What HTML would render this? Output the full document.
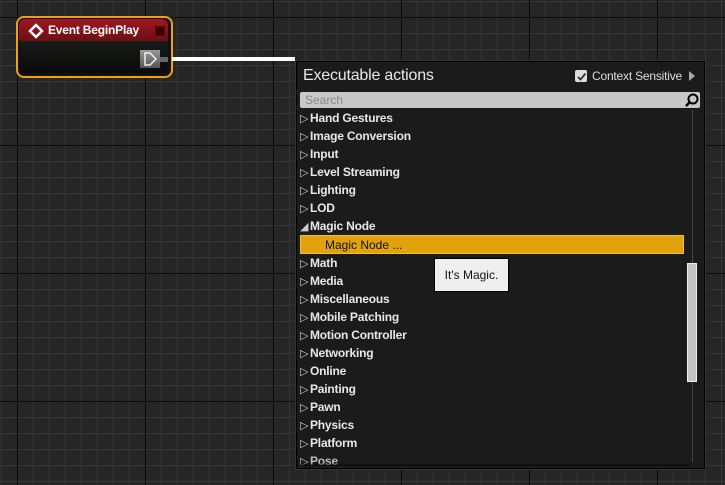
<!DOCTYPE html><html><head><style>
body{margin:0;width:725px;height:485px;overflow:hidden;position:relative;background-color:#262626;
background-image:linear-gradient(90deg,#0c0c0c 1px,transparent 1px),linear-gradient(#0c0c0c 1px,transparent 1px),linear-gradient(90deg,#353535 1px,transparent 1px),linear-gradient(#353535 1px,transparent 1px);
background-size:128px 128px,128px 128px,16px 16px,16px 16px;
background-position:17px 17px,17px 17px,1px 1px,1px 1px;font-family:"Liberation Sans",sans-serif}
.a{position:absolute}
.row{position:absolute;left:300px;height:18px;line-height:18px;color:#e8e8e8;font-weight:bold;font-size:12px;letter-spacing:-0.2px}
.row i{font-style:normal;font-weight:normal;font-size:11px;color:#ccc;display:inline-block;width:10px}
</style></head><body>
<div class="a" style="left:16px;top:16px;width:153px;height:58px;border:2px solid #f0a010;border-radius:8px;background:#111"></div>
<div class="a" style="left:19px;top:19px;width:149px;height:22px;background:linear-gradient(#a01820,#6a1014);border-radius:6px 6px 0 0"></div>
<div class="a" style="left:19px;top:41px;width:149px;height:32px;background:linear-gradient(#181c18,#0a0a0a);border-radius:0 0 6px 6px"></div>
<svg class="a" style="left:28px;top:23px" width="16" height="16"><path d="M8 2L14 8L8 14L2 8Z" fill="none" stroke="#fff" stroke-width="2.5"/></svg>
<div class="a" style="left:48px;top:23px;color:#fff;font-weight:bold;font-size:12px;letter-spacing:-0.2px">Event BeginPlay</div>
<div class="a" style="left:155px;top:26px;width:8px;height:8px;background:#300;border:1px solid #700"></div>
<div class="a" style="left:140px;top:50px;width:20px;height:18px;background:linear-gradient(#999,#555)"></div>
<svg class="a" style="left:143px;top:52px" width="16" height="14"><path d="M2 1H7L13 7L7 13H2Z" fill="none" stroke="#eee" stroke-width="1.5"/></svg>
<div class="a" style="left:160px;top:57px;width:8px;height:5px;background:#666"></div>
<div class="a" style="left:172px;top:57px;width:123px;height:4px;background:#fff"></div>
<div class="a" style="left:296px;top:61px;width:407px;height:406px;background:#1b1b1b;border:1px solid #000;box-shadow:0 0 0 1px #333"></div>
<div class="a" style="left:303px;top:67px;color:#e8e8e8;font-size:16px;letter-spacing:-0.2px">Executable actions</div>
<div class="a" style="left:575px;top:70px;width:12px;height:12px;background:#ddd;border-radius:2px"></div>
<svg class="a" style="left:576px;top:71px" width="11" height="11"><path d="M2 6L4.5 8.5L9.5 2.5" fill="none" stroke="#333" stroke-width="1.8"/></svg>
<div class="a" style="left:592px;top:69px;color:#ddd;font-size:12px;letter-spacing:-0.2px">Context Sensitive</div>
<svg class="a" style="left:689px;top:71px" width="6" height="10"><path d="M0 0L6 5L0 10Z" fill="#aaa"/></svg>
<div class="a" style="left:300px;top:92px;width:400px;height:16px;background:#c8c8c8;border-radius:2px"></div>
<div class="a" style="left:305px;top:93px;color:#888;font-size:12px">Search</div>
<svg class="a" style="left:684px;top:92px" width="16" height="16"><circle cx="9" cy="7" r="4.5" fill="none" stroke="#000" stroke-width="2"/><path d="M6 10L2 14" stroke="#000" stroke-width="2.5"/></svg>
<div class="a" style="left:692px;top:110px;width:1px;height:352px;background:#444"></div>
<div class="a" style="left:687px;top:263px;width:10px;height:119px;background:#c4c4c4;border:1px solid #eee;box-sizing:border-box"></div>
<div class="a" style="left:300px;top:235px;width:384px;height:19px;background:#e0a30b;border:1px solid #f0c030;box-sizing:border-box"></div>
<div class="a" style="left:325px;top:237px;color:#111;font-size:12px;line-height:17px">Magic Node ...</div>
<div class="row" style="top:109px"><i>▷</i>Hand Gestures</div>
<div class="row" style="top:127px"><i>▷</i>Image Conversion</div>
<div class="row" style="top:145px"><i>▷</i>Input</div>
<div class="row" style="top:163px"><i>▷</i>Level Streaming</div>
<div class="row" style="top:181px"><i>▷</i>Lighting</div>
<div class="row" style="top:199px"><i>▷</i>LOD</div>
<div class="row" style="top:217px"><i>◢</i>Magic Node</div>
<div class="row" style="top:254px"><i>▷</i>Math</div>
<div class="row" style="top:272px"><i>▷</i>Media</div>
<div class="row" style="top:290px"><i>▷</i>Miscellaneous</div>
<div class="row" style="top:308px"><i>▷</i>Mobile Patching</div>
<div class="row" style="top:326px"><i>▷</i>Motion Controller</div>
<div class="row" style="top:344px"><i>▷</i>Networking</div>
<div class="row" style="top:362px"><i>▷</i>Online</div>
<div class="row" style="top:380px"><i>▷</i>Painting</div>
<div class="row" style="top:398px"><i>▷</i>Pawn</div>
<div class="row" style="top:416px"><i>▷</i>Physics</div>
<div class="row" style="top:434px"><i>▷</i>Platform</div>
<div class="row" style="top:452px;color:#bbb"><i>▷</i>Pose</div>
<div class="a" style="left:300px;top:463px;width:390px;height:3px;background:linear-gradient(transparent,#0a0a0a)"></div>
<div class="a" style="left:434px;top:258px;width:75px;height:34px;background:#efefef;border:1px solid #000;box-sizing:border-box;color:#111;font-size:12px;line-height:32px;text-align:center">It's Magic.</div>
</body></html>
